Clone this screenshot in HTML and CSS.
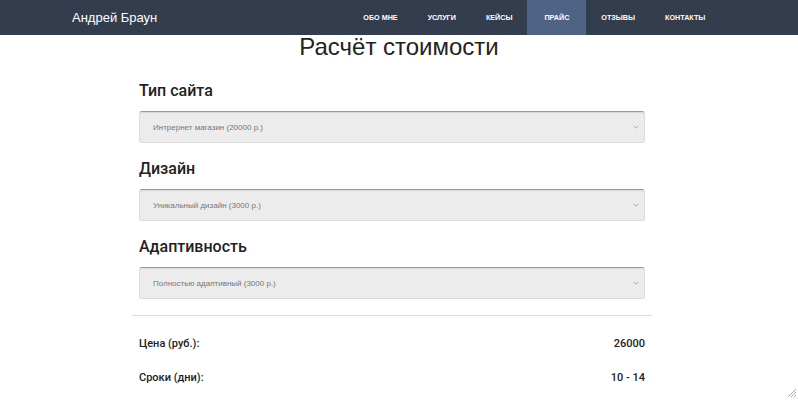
FILE: index.html
```html
<!DOCTYPE html>
<html lang="ru">
<head>
<meta charset="utf-8">
<title>Расчёт стоимости</title>
<link rel="stylesheet" href="styles.css">
</head>
<body>
<header class="navbar">
  <a class="brand" href="#">Андрей Браун</a>
  <nav class="menu">
    <a href="#">Обо мне</a>
    <a href="#">Услуги</a>
    <a href="#">Кейсы</a>
    <a href="#" class="active">Прайс</a>
    <a href="#">Отзывы</a>
    <a href="#">Контакты</a>
  </nav>
</header>
<main class="page">
  <h1 class="title">Расчёт стоимости</h1>
  <section class="calc">
    <div class="group">
      <h2 class="label">Тип сайта</h2>
      <div class="select"><span>Интрернет магазин (20000 р.)</span><svg class="chev" viewBox="0 0 10 6" width="6" height="4"><path d="M1 1l4 4 4-4" fill="none" stroke="#999" stroke-width="1.3"/></svg></div>
    </div>
    <div class="group">
      <h2 class="label">Дизайн</h2>
      <div class="select"><span>Уникальный дизайн (3000 р.)</span><svg class="chev" viewBox="0 0 10 6" width="6" height="4"><path d="M1 1l4 4 4-4" fill="none" stroke="#999" stroke-width="1.3"/></svg></div>
    </div>
    <div class="group">
      <h2 class="label">Адаптивность</h2>
      <div class="select"><span>Полностью адаптивный (3000 р.)</span><svg class="chev" viewBox="0 0 10 6" width="6" height="4"><path d="M1 1l4 4 4-4" fill="none" stroke="#999" stroke-width="1.3"/></svg></div>
    </div>
    <hr class="divider">
    <div class="row"><span>Цена (руб.):</span><span>26000</span></div>
    <div class="row"><span>Сроки (дни):</span><span>10 - 14</span></div>
  </section>
</main>
<svg class="resize" width="12" height="12" viewBox="0 0 12 12"><path d="M11 3L3 11M11 6L6 11M11 9L9 11" stroke="#aaa" stroke-width="1"/></svg>
</body>
</html>
```
FILE: styles.css
```css
* { box-sizing: border-box; }
html, body { margin: 0; padding: 0; }
body {
  font-family: "Liberation Sans", Arial, sans-serif;
  color: #222;
  background: #fff;
  width: 798px;
  height: 400px;
  overflow: hidden;
}
.navbar {
  position: fixed;
  top: 0; left: 0; right: 0;
  height: 35px;
  background: #343d4e;
  display: flex;
  align-items: stretch;
  padding-left: 72px;
  z-index: 10;
}
.brand {
  color: #fff;
  text-decoration: none;
  font-size: 13px;
  line-height: 35px;
  margin-right: 191px;
}
.menu { display: flex; }
.menu a {
  color: #fff;
  text-decoration: none;
  text-transform: uppercase;
  font-size: 7.2px;
  font-weight: 700;
  line-height: 35px;
  padding: 0 15px;
}
.menu a.active { background: #4f6384; padding: 0 17px; }
.page { padding-top: 32px; }
.title {
  margin: 0;
  text-align: center;
  font-weight: 400;
  font-size: 24px;
  line-height: 30px;
  color: #222;
}
.calc {
  width: 520px;
  margin-left: 132px;
  padding-top: 19px;
}
.group { padding: 0 7px; margin-bottom: 16px; }
.label {
  margin: 0 0 10px;
  font-family: Roboto, "Liberation Sans", sans-serif;
  font-weight: 500;
  font-size: 16px;
  line-height: 20px;
  color: #222;
}
.select {
  height: 32px;
  background: #ececec;
  border: 1px solid #dcdcdc;
  border-top-color: #9a9a9a;
  border-radius: 3px;
  box-shadow: inset 0 1px 1px rgba(0,0,0,0.08);
  display: flex;
  align-items: center;
  justify-content: space-between;
  padding: 0 5px 0 13px;
  font-size: 8px;
  color: #777;
}
.chev { display: block; }
.divider {
  border: 0;
  border-top: 1px solid #ddd;
  margin: 0;
}
.row {
  display: flex;
  justify-content: space-between;
  padding: 0 7px;
  font-family: Roboto, "Liberation Sans", sans-serif;
  font-size: 11px;
  font-weight: 500;
  color: #222;
  height: 34px;
  align-items: center;
}
.divider + .row { margin-top: 10px; }
.resize { position: fixed; right: 1px; bottom: 2px; }
```
